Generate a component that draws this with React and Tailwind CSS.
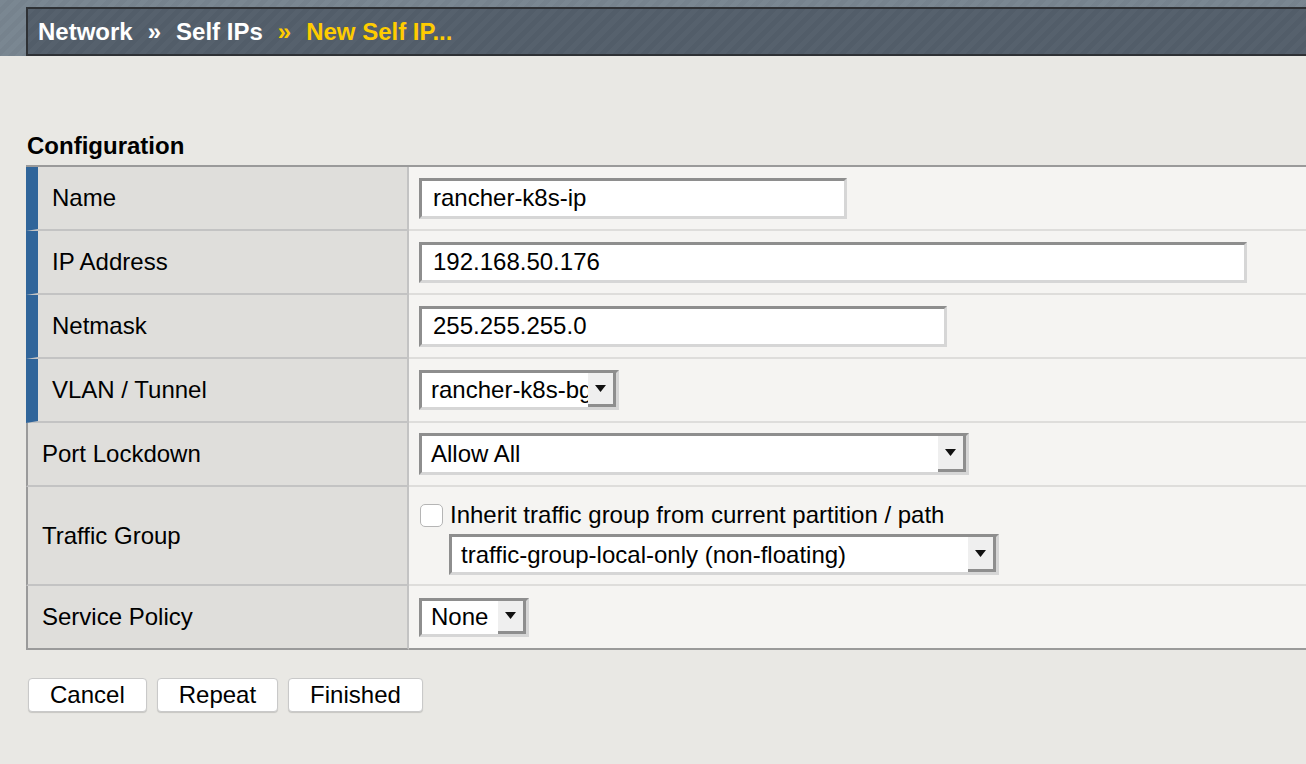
import React from "react";

const FONT = { fontFamily: '"Liberation Sans", Arial, Helvetica, sans-serif' };

function TextInput({ value, width }) {
  return (
    <div
      className={`${width} h-[41px] bg-white border-[3px] border-t-[#8e8e8e] border-l-[#8e8e8e] border-b-[#d6d6d6] border-r-[#d6d6d6] flex items-center pl-[11px] text-[24px] text-black`}
    >
      {value}
    </div>
  );
}

function Arrow() {
  return (
    <div className="w-[28px] self-stretch bg-[#efefef] border-r-[3px] border-b-[3px] border-r-[#8e8e8e] border-b-[#8e8e8e] flex items-center justify-center shrink-0">
      <svg width="11" height="7" viewBox="0 0 11 7">
        <path d="M0 0 L11 0 L5.5 7 Z" fill="#111" />
      </svg>
    </div>
  );
}

function Select({ value, width, height = "h-[41px]" }) {
  return (
    <div
      className={`${width} ${height} bg-white border-[3px] border-t-[#8e8e8e] border-l-[#8e8e8e] border-b-[#d6d6d6] border-r-[#d6d6d6] flex items-stretch text-[24px] text-black`}
    >
      <div className="flex-1 min-w-0 overflow-hidden whitespace-nowrap flex items-center pl-[9px]">
        {value}
      </div>
      <Arrow />
    </div>
  );
}

function Row({ label, required, last, tall, children }) {
  return (
    <div className={`flex ${tall ? "h-[99px]" : "h-[64px]"}`}>
      <div
        className={`w-[383px] shrink-0 bg-[#dfdedb] flex items-center text-[24px] text-black border-r-2 border-r-[#c3c3c3] ${
          last ? "border-b-2 border-b-[#9a9a9a]" : "border-b-2 border-b-[#c3c3c3]"
        } ${required ? "border-l-[12px] border-l-[#30659a] pl-[14px]" : "border-l-2 border-l-[#9a9a9a] pl-[14px]"}`}
      >
        {label}
      </div>
      <div
        className={`flex-1 bg-[#f5f4f2] flex pl-[10px] ${
          last ? "border-b-2 border-b-[#9a9a9a]" : "border-b-2 border-b-[#dedddb]"
        } ${tall ? "flex-col justify-start pt-[15px]" : "items-center"}`}
      >
        {children}
      </div>
    </div>
  );
}

function Button({ children }) {
  return (
    <button className="h-[34px] px-[21px] bg-white border border-[#c9c9c9] rounded-[4px] shadow-[0_1px_1px_rgba(0,0,0,0.15)] text-[24px] text-black leading-none flex items-center">
      {children}
    </button>
  );
}

export default function App() {
  return (
    <div className="w-[1306px] h-[764px] bg-[#e9e8e4] overflow-hidden" style={FONT}>
      {/* Header */}
      <div className="h-[56px] pt-[7px] pl-[26px] bg-[#77848f] bg-[repeating-linear-gradient(135deg,rgba(255,255,255,0.025)_0px,rgba(255,255,255,0.025)_5px,rgba(0,0,0,0.01)_5px,rgba(0,0,0,0.01)_10px)]">
        <div className="h-[49px] bg-[#535e6a] bg-[repeating-linear-gradient(135deg,rgba(255,255,255,0.02)_0px,rgba(255,255,255,0.02)_5px,rgba(0,0,0,0.01)_5px,rgba(0,0,0,0.01)_10px)] border-2 border-r-0 border-[#2e3135] flex items-center pl-[10px] text-[24px] font-bold">
          <span className="text-white">Network</span>
          <span className="text-white ml-[15px] mr-[15px]">»</span>
          <span className="text-white">Self IPs</span>
          <span className="text-[#ffcc00] ml-[15px] mr-[15px]">»</span>
          <span className="text-[#ffcc00]">New Self IP...</span>
        </div>
      </div>

      {/* Configuration */}
      <div className="pl-[26px] pt-[78px]">
        <div className="text-[24px] font-bold text-black leading-none h-[31px] pl-[1px]">
          Configuration
        </div>
        <div className="border-t-2 border-t-[#9a9a9a]">
          <Row label="Name" required>
            <TextInput value="rancher-k8s-ip" width="w-[428px]" />
          </Row>
          <Row label="IP Address" required>
            <TextInput value="192.168.50.176" width="w-[828px]" />
          </Row>
          <Row label="Netmask" required>
            <TextInput value="255.255.255.0" width="w-[528px]" />
          </Row>
          <Row label="VLAN / Tunnel" required>
            <Select value="rancher-k8s-bgp" width="w-[200px]" height="h-[40px]" />
          </Row>
          <Row label="Port Lockdown">
            <Select value="Allow All" width="w-[550px]" height="h-[42px]" />
          </Row>
          <Row label="Traffic Group" tall>
            <div className="flex items-center h-[26px] text-[24px] text-black">
              <div className="w-[23px] h-[23px] bg-white border border-[#b5b5b5] rounded-[5px] ml-[1px] mr-[7px]" />
              <span>Inherit traffic group from current partition / path</span>
            </div>
            <div className="ml-[30px] mt-[6px]">
              <Select value="traffic-group-local-only (non-floating)" width="w-[550px]" height="h-[41px]" />
            </div>
          </Row>
          <Row label="Service Policy" last>
            <Select value="None" width="w-[110px]" height="h-[39px]" />
          </Row>
        </div>

        {/* Buttons */}
        <div className="flex gap-[10px] pl-[2px] mt-[28px]">
          <Button>Cancel</Button>
          <Button>Repeat</Button>
          <Button>Finished</Button>
        </div>
      </div>
    </div>
  );
}
